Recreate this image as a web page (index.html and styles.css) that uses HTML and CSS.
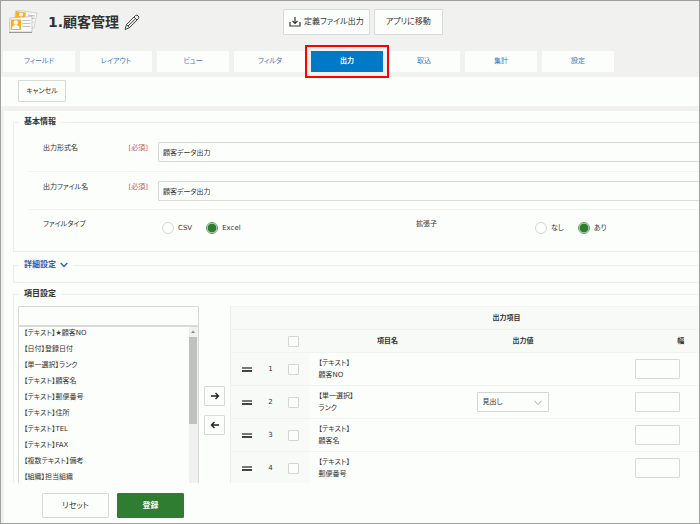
FILE: index.html
```html
<!DOCTYPE html>
<html lang="ja">

<head>
  <meta charset="UTF-8">
  <meta name="viewport" content="width=device-width, initial-scale=1.0">
  <title>1.顧客管理</title>
  <link rel="stylesheet" href="styles.css">
</head>

<body>

  <header class="app-header">
    <div class="app-title">
      <svg class="app-icon" width="29" height="24" viewBox="0 0 29 24">
        <path d="M7 0 L28 3 L25 18 L4 16 Z" fill="#fafafa" stroke="#c4c4c4" stroke-width=".7" />
        <path d="M7 1 L17 2.4 L16 8 L6 8 Z" fill="#f6b02c" />
        <circle cx="12" cy="4.5" r="2" fill="#fff" />
        <path d="M19 5 L26 6 M18.5 7.5 L25.5 8.5 M24 12 L25 12" stroke="#bbb" />
        <path d="M1 8 L23 6.500 L23 22 L0 22 Z" fill="#fafafa" stroke="#b4b4b4" stroke-width=".7" />
        <path d="M2 9.500 H12 V20 H1.500 Z" fill="#f8ad22" />
        <circle cx="6.800" cy="12.500" r="2.200" fill="#fff" />
        <path d="M3 19 Q3 15 6.800 15 Q10.500 15 10.500 19 Z" fill="#fff" />
        <path d="M13.500 10.500 H21.500 M13.500 13.500 H21.500 M13.500 16.500 H21.500" stroke="#c4c4c4" />
        <path d="M0 22.500 H23" stroke="#999" />
      </svg>
      <h1>1.顧客管理</h1>
      <svg width="16" height="17" viewBox="0 0 16 17" fill="none" stroke="#444" stroke-width="1">
        <path d="M1 15.500 L2.500 10.500 L11.500 1.500 Q13 .500 14.300 2 Q15.400 3.500 14.300 4.700 L5.500 13.700 Z" />
        <path d="M2.500 10.500 L5.500 13.700 M10 3 L13 6 M4 12 L11.800 4.500" />
      </svg>
    </div>
    <button class="btn btn-tool" type="button">
      <svg width="12" height="10" viewBox="0 0 12 10" fill="none" stroke="#333" stroke-width="1.200">
        <path d="M6 0 V6 M3.500 4 L6 6.500 L8.500 4 M1 5 V9 H11 V5" />
      </svg>
      定義ファイル出力
    </button>
    <button class="btn btn-tool" type="button">アプリに移動</button>
  </header>

  <nav class="tabs">
    <a href="#">フィールド</a>
    <a href="#">レイアウト</a>
    <a href="#">ビュー</a>
    <a href="#">フィルタ</a>
    <a href="#" class="active">出力</a>
    <a href="#">取込</a>
    <a href="#">集計</a>
    <a href="#">設定</a>
  </nav>

  <div class="toolbar">
    <button class="btn btn-cancel" type="button">キャンセル</button>
  </div>

  <form class="panel" id="outputForm">
    <div class="content">

      <fieldset class="basic">
        <legend>基本情報</legend>
        <div class="form-row">
          <label for="formatName">出力形式名 <span class="required">[必須]</span></label>
          <input type="text" id="formatName" value="顧客データ出力">
        </div>
        <div class="form-row">
          <label for="fileName">出力ファイル名 <span class="required">[必須]</span></label>
          <input type="text" id="fileName" value="顧客データ出力">
        </div>
        <div class="form-row halves">
          <div class="half" role="radiogroup" aria-labelledby="fileTypeLabel">
            <span class="row-label" id="fileTypeLabel">ファイルタイプ</span>
            <div class="radios">
              <label><input type="radio" name="fileType" value="csv">CSV</label>
              <label><input type="radio" name="fileType" value="excel" checked>Excel</label>
            </div>
          </div>
          <div class="half" role="radiogroup" aria-labelledby="extensionLabel">
            <span class="row-label" id="extensionLabel">拡張子</span>
            <div class="radios">
              <label><input type="radio" name="extension" value="0">なし</label>
              <label><input type="radio" name="extension" value="1" checked>あり</label>
            </div>
          </div>
        </div>
      </fieldset>

      <fieldset class="detail">
        <legend>
          <button class="toggle" type="button">詳細設定
            <svg width="8" height="6" viewBox="0 0 8 6" fill="none" stroke="#2f5fb8" stroke-width="1.400">
              <path d="M.7 1 L4 4.500 L7.300 1" />
            </svg>
          </button>
        </legend>
      </fieldset>

      <fieldset class="items">
        <legend>項目設定</legend>
        <div class="items-body">
          <div class="picker">
            <input type="text" class="search" aria-label="項目を検索">
            <div class="list">
              <select multiple aria-label="項目">
                <option>【テキスト】★顧客NO</option>
                <option>【日付】登録日付</option>
                <option>【単一選択】ランク</option>
                <option>【テキスト】顧客名</option>
                <option>【テキスト】郵便番号</option>
                <option>【テキスト】住所</option>
                <option>【テキスト】TEL</option>
                <option>【テキスト】FAX</option>
                <option>【複数テキスト】備考</option>
                <option>【組織】担当組織</option>
              </select>
              <div class="scrollbar">
                <svg width="8" height="10" viewBox="0 0 8 10"><path d="M2 6 L4 3.500 L6 6 Z" fill="#888" /></svg>
                <div class="thumb"></div>
              </div>
            </div>
          </div>

          <div class="movers">
            <button class="btn" type="button" aria-label="追加">
              <svg width="10" height="8" viewBox="0 0 10 8" fill="none" stroke="#222" stroke-width="1.400">
                <path d="M1 4 H8.500 M5.500 1 L8.500 4 L5.500 7" />
              </svg>
            </button>
            <button class="btn" type="button" aria-label="削除">
              <svg width="10" height="8" viewBox="0 0 10 8" fill="none" stroke="#222" stroke-width="1.400">
                <path d="M9 4 H1.500 M4.500 1 L1.500 4 L4.500 7" />
              </svg>
            </button>
          </div>

          <table class="outputs">
            <colgroup>
              <col class="col-drag">
              <col class="col-no">
              <col class="col-check">
              <col class="col-name">
              <col class="col-value">
              <col>
            </colgroup>
            <thead>
              <tr>
                <th colspan="6">出力項目</th>
              </tr>
              <tr>
                <th></th>
                <th></th>
                <th><input type="checkbox" aria-label="すべて選択"></th>
                <th>項目名</th>
                <th>出力値</th>
                <th>幅</th>
              </tr>
            </thead>
            <tbody>
              <tr>
                <td class="side"><span class="drag"></span></td>
                <td class="side no">1</td>
                <td class="side"><input type="checkbox" aria-label="1"></td>
                <td class="name">【テキスト】<br>顧客NO</td>
                <td></td>
                <td class="width"><input type="text" aria-label="幅 1"></td>
              </tr>
              <tr>
                <td class="side"><span class="drag"></span></td>
                <td class="side no">2</td>
                <td class="side"><input type="checkbox" aria-label="2"></td>
                <td class="name">【単一選択】<br>ランク</td>
                <td>
                  <div class="dropdown">
                    <select aria-label="出力値 2">
                      <option>見出し</option>
                    </select>
                    <svg width="8" height="6" viewBox="0 0 8 6" fill="none" stroke="#aaa">
                      <path d="M.5 .7 L4 4.700 L7.500 .7" />
                    </svg>
                  </div>
                </td>
                <td class="width"><input type="text" aria-label="幅 2"></td>
              </tr>
              <tr>
                <td class="side"><span class="drag"></span></td>
                <td class="side no">3</td>
                <td class="side"><input type="checkbox" aria-label="3"></td>
                <td class="name">【テキスト】<br>顧客名</td>
                <td></td>
                <td class="width"><input type="text" aria-label="幅 3"></td>
              </tr>
              <tr>
                <td class="side"><span class="drag"></span></td>
                <td class="side no">4</td>
                <td class="side"><input type="checkbox" aria-label="4"></td>
                <td class="name">【テキスト】<br>郵便番号</td>
                <td></td>
                <td class="width"><input type="text" aria-label="幅 4"></td>
              </tr>
            </tbody>
          </table>
        </div>
      </fieldset>

    </div>
  </form>

  <footer class="actions">
    <button class="btn" type="reset" form="outputForm">リセット</button>
    <button class="btn btn-primary" type="submit" form="outputForm">登録</button>
  </footer>

</body>

</html>
```
FILE: styles.css
```css
* {
  box-sizing: border-box;
}

body {
  margin: 0;
  height: 100vh;
  display: flex;
  flex-direction: column;
  overflow: hidden;
  border: 1px solid #a0a0a0;
  background: #f1f2f0;
  color: #333;
  font-family: "DejaVu Sans", "Noto Sans CJK JP", sans-serif;
  font-size: 7px;
  line-height: 12px;
  font-feature-settings: "palt";
}

button,
input,
select {
  margin: 0;
  color: inherit;
  font: inherit;
  font-feature-settings: inherit;
}

svg {
  flex: none;
}

input[type="text"] {
  height: 20px;
  padding: 0 4px;
  border: 1px solid #d8dad8;
  border-radius: 1px;
  background: #fcfefc;
}

.btn {
  display: flex;
  align-items: center;
  justify-content: center;
  padding: 0;
  border: 1px solid #d8dad8;
  border-radius: 1px;
  background: #fcfefc;
  cursor: pointer;
}

/* header */
.app-header {
  flex: none;
  display: flex;
  align-items: center;
  gap: 4px;
  height: 50px;
  padding: 0 8px 8px;
}

.app-title {
  display: flex;
  align-items: center;
  width: 270px;
}

.app-title h1 {
  margin: 0 5px 0 10px;
  font-size: 14px;
  line-height: 20px;
  font-weight: 600;
}

.btn-tool {
  gap: 3px;
  height: 26px;
  padding: 0 5px;
  font-size: 8px;
}

.btn-tool:last-child {
  padding: 0 11px;
}

/* tabs */
.tabs {
  flex: none;
  display: flex;
  gap: 5px;
  padding: 0 2px 5px;
}

.tabs a {
  width: 72px;
  background: #fcfefc;
  color: #3f74c4;
  line-height: 21px;
  text-align: center;
  text-decoration: none;
}

.tabs .active {
  position: relative;
  outline: 2px solid #f00;
  outline-offset: 4px;
  background: #007ac7;
  color: #fff;
  font-weight: bold;
}

.toolbar {
  flex: none;
  padding: 3px 17px 4px;
  margin-bottom: 5px;
  background: #fcfefc;
}

.btn-cancel {
  width: 48px;
  height: 22px;
}

/* main panel, runs past the right edge */
.panel {
  flex: 1;
  min-height: 0;
  margin-left: 3px;
  overflow: hidden;
  background: #fcfefc;
}

.content {
  margin-right: -90px;
  padding: 5px 0 0 9px;
}

fieldset {
  min-width: 0;
  margin: 0;
  padding: 0 14px;
  border: 1px solid #eceeec;
}

legend {
  margin-left: -9px;
  padding: 0 5px;
  font-size: 8px;
  font-weight: bold;
}

.basic {
  padding-top: 5px;
  padding-bottom: 4px;
  margin-bottom: 7px;
}

.form-row {
  display: flex;
  height: 38px;
  padding: 9px 0 0 15px;
}

.form-row + .form-row {
  border-top: 1px solid #f1f3f1;
}

.form-row > label {
  display: flex;
  justify-content: space-between;
  width: 115px;
  padding-right: 10px;
}

.required {
  color: #c0605c;
}

.form-row > input {
  flex: 1;
}

.halves {
  padding-top: 8px;
  padding-left: 0;
}

.half {
  flex: 1;
  display: flex;
  padding-left: 15px;
}

.row-label {
  width: 119px;
}

.radios {
  display: flex;
  align-items: flex-start;
  gap: 14px;
  padding-top: 4px;
}

.radios label {
  display: flex;
  align-items: center;
  gap: 4px;
}

input[type="radio"] {
  appearance: none;
  width: 12px;
  height: 12px;
  border: 1px solid #d4d6d4;
  border-radius: 50%;
  background: #fcfefc;
}

input[type="radio"]:checked {
  border-color: #5e9c60;
  background: radial-gradient(circle, #2f7d31 4px, #fcfefc 5px);
}

.detail {
  margin-bottom: 5px;
  padding-bottom: 11px;
}

.toggle {
  display: flex;
  align-items: center;
  gap: 4px;
  padding: 0;
  border: 0;
  background: none;
  color: #2f5fb8;
  cursor: pointer;
}

/* item settings */
.items {
  padding: 0 6px 0 4px;
}

.items legend {
  margin-left: 1px;
}

.items-body {
  display: flex;
  align-items: flex-start;
  padding-top: 6px;
}

.picker {
  width: 181px;
}

.search {
  display: block;
  width: 100%;
}

.list {
  display: flex;
  height: 200px;
  border: 1px solid #d8dad8;
}

.list select {
  flex: 1;
  height: 100%;
  padding: 0;
  border: 0;
  outline: 0;
  overflow: hidden;
  background: #fcfefc;
}

.list option {
  min-height: 16px;
  padding: 0 5px;
  line-height: 16px;
}

.scrollbar {
  width: 9px;
  background: #eff0ef;
}

.thumb {
  width: 8px;
  height: 87px;
  background: #bfc1bf;
}

.scrollbar svg {
  display: block;
}

.movers {
  display: flex;
  flex-direction: column;
  gap: 9px;
  padding: 80px 5px 0;
}

.movers .btn {
  width: 21px;
  height: 20px;
}

.outputs {
  flex: 1;
  table-layout: fixed;
  border-collapse: collapse;
}

.col-drag {
  width: 32px;
}

.col-no {
  width: 16px;
}

.col-check {
  width: 30px;
}

.col-name {
  width: 158px;
}

.col-value {
  width: 113px;
}

.outputs tr {
  height: 33px;
}

.outputs thead tr {
  height: 23px;
}

.outputs th,
.outputs td {
  padding: 0;
  border-top: 1px solid #f1f3f1;
}

.outputs th,
.outputs .side {
  background: #f8faf8;
  text-align: center;
}

.outputs th:first-child,
.outputs td:first-child {
  border-left: 1px solid #eceeec;
}

.outputs .name {
  padding-left: 10px;
}

.outputs .width {
  padding-left: 55px;
}

.width input {
  width: 45px;
}

input[type="checkbox"] {
  appearance: none;
  display: block;
  width: 11px;
  height: 11px;
  margin: 0 auto;
  border: 1px solid #d4d6d4;
  border-radius: 1px;
  background: #fcfefc;
}

.drag {
  display: block;
  width: 10px;
  height: 5px;
  margin: 0 auto;
  border-top: 2px solid #777;
  border-bottom: 2px solid #444;
}

.dropdown {
  position: relative;
  width: 72px;
  margin-left: 10px;
}

.dropdown select {
  appearance: none;
  display: block;
  width: 100%;
  height: 20px;
  padding: 0 5px;
  border: 1px solid #d4d6d4;
  border-radius: 1px;
  background: #fcfefc;
}

.dropdown svg {
  position: absolute;
  top: 8px;
  right: 7px;
}

/* bottom bar */
.actions {
  flex: none;
  display: flex;
  gap: 8px;
  margin-left: 3px;
  padding: 10px 38px 5px;
  background: #fcfefc;
}

.actions .btn {
  width: 67px;
  height: 25px;
  font-size: 8px;
}

.actions .btn-primary {
  border-color: #2f7d31;
  background: #2f7d31;
  color: #fff;
  font-weight: bold;
}
```
